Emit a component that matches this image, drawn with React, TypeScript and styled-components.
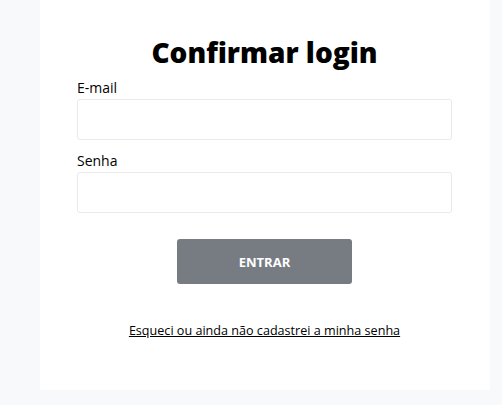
import * as React from 'react';
import styled, { createGlobalStyle } from 'styled-components';

const GlobalStyle = createGlobalStyle`
  html, body {
    margin: 0;
    padding: 0;
    background: #f8f9fb;
    font-family: "Open Sans", "Liberation Sans", sans-serif;
    color: #000;
  }
`;

const Page = styled.div({
  padding: '0 12px 16px 40px',
});

const Card = styled.div({
  width: '450px',
  boxSizing: 'border-box',
  background: '#fff',
  padding: '33px 38px 50px 37px',
});

const Title = styled.h1({
  margin: '0 0 8px 0',
  fontSize: '28px',
  lineHeight: '38px',
  fontWeight: 800,
  textAlign: 'center',
});

const Field = styled.div({
  display: 'flex',
  flexDirection: 'column',
  marginBottom: '12px',
});

const Label = styled.label({
  fontSize: '14px',
  lineHeight: '18px',
  marginBottom: '2px',
});

const Input = styled.input({
  boxSizing: 'border-box',
  height: '41px',
  width: '100%',
  border: '1px solid #e9e9e9',
  borderRadius: '3px',
  background: '#fff',
  outline: 'none',
  padding: '0 10px',
  fontFamily: 'inherit',
  fontSize: '14px',
});

const Actions = styled.div({
  display: 'flex',
  justifyContent: 'center',
  marginTop: '26px',
});

const Button = styled.button({
  width: '175px',
  height: '45px',
  border: 'none',
  borderRadius: '3px',
  background: '#777c82',
  color: '#fff',
  fontFamily: 'inherit',
  fontWeight: 700,
  fontSize: '13px',
  cursor: 'pointer',
});

const LinkRow = styled.div({
  textAlign: 'center',
  marginTop: '34px',
});

const ForgotLink = styled.a({
  fontSize: '12.6px',
  lineHeight: '18px',
  color: '#000',
  textDecoration: 'underline',
});

export default function App() {
  return (
    <Page>
      <GlobalStyle />
      <Card>
        <Title>Confirmar login</Title>
        <Field>
          <Label htmlFor="email">E-mail</Label>
          <Input id="email" type="email" />
        </Field>
        <Field>
          <Label htmlFor="senha">Senha</Label>
          <Input id="senha" type="password" />
        </Field>
        <Actions>
          <Button>ENTRAR</Button>
        </Actions>
        <LinkRow>
          <ForgotLink href="#">Esqueci ou ainda não cadastrei a minha senha</ForgotLink>
        </LinkRow>
      </Card>
    </Page>
  );
}
